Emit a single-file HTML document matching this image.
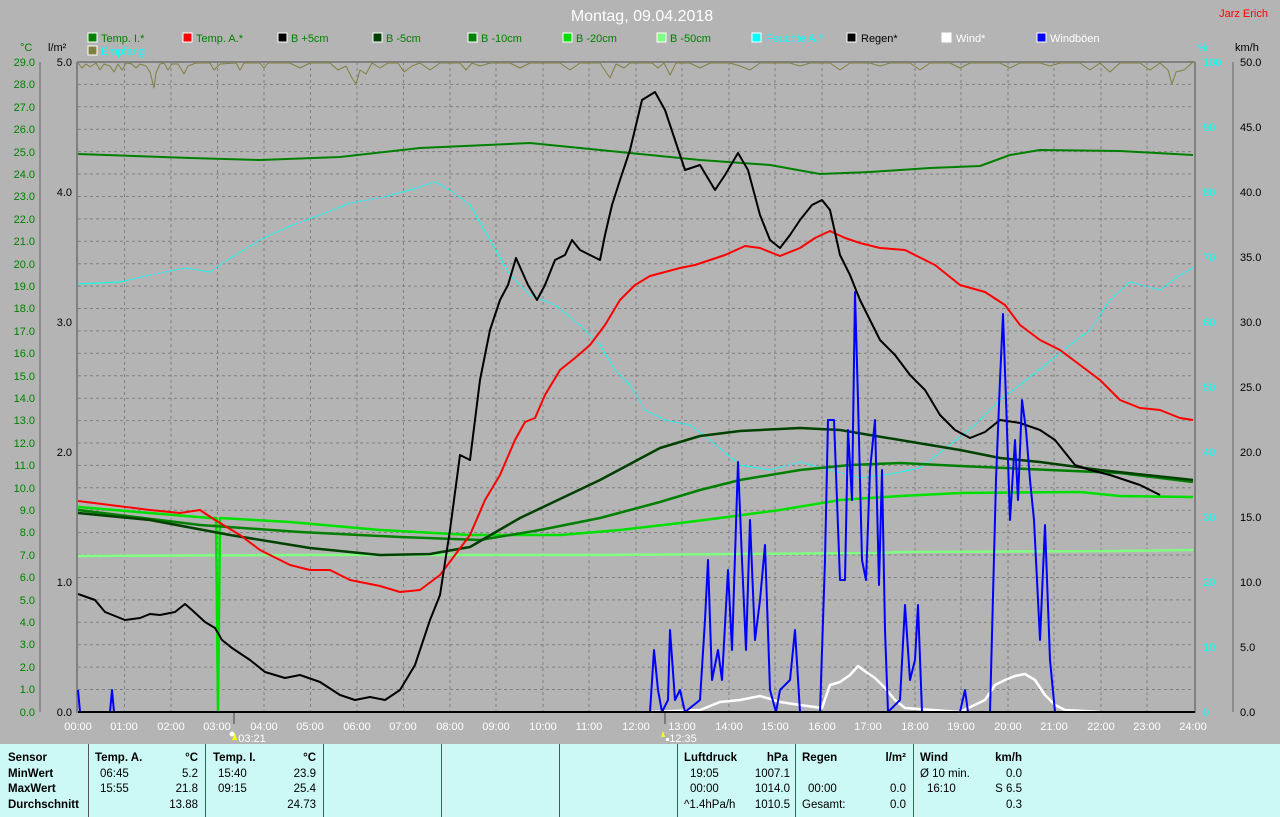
<!DOCTYPE html>
<html><head><meta charset="utf-8"><style>
body{margin:0;width:1280px;height:817px;background:#b4b4b4;overflow:hidden;font-family:"Liberation Sans",sans-serif}
svg{position:absolute;left:0;top:0}
.tbl{position:absolute;left:0;top:744px;width:1280px;height:73px;background:#ccf8f5}
.sep{position:absolute;top:0;height:73px;width:1px;background:#555}
.t{position:absolute;font-size:11.5px;color:#000;white-space:nowrap}
.b{font-weight:bold}
.r{text-align:right}
</style></head><body>
<svg width="1280" height="744" font-family="Liberation Sans, sans-serif">
<text x="642" y="21" fill="#fff" font-size="16" text-anchor="middle">Montag, 09.04.2018</text>
<text x="1268" y="17" fill="#f00" font-size="11" text-anchor="end">Jarz Erich</text>
<g font-size="11">
<rect x="88" y="33" width="9" height="9" fill="#008000" stroke="#fff"/><text x="101" y="42" fill="#008000">Temp. I.*</text>
<rect x="183" y="33" width="9" height="9" fill="#f00" stroke="#fff"/><text x="196" y="42" fill="#008000">Temp. A.*</text>
<rect x="278" y="33" width="9" height="9" fill="#000" stroke="#fff"/><text x="291" y="42" fill="#008000">B +5cm</text>
<rect x="373" y="33" width="9" height="9" fill="#004000" stroke="#fff"/><text x="386" y="42" fill="#008000">B -5cm</text>
<rect x="468" y="33" width="9" height="9" fill="#008000" stroke="#fff"/><text x="481" y="42" fill="#008000">B -10cm</text>
<rect x="563" y="33" width="9" height="9" fill="#00e000" stroke="#fff"/><text x="576" y="42" fill="#008000">B -20cm</text>
<rect x="657" y="33" width="9" height="9" fill="#80ff80" stroke="#fff"/><text x="670" y="42" fill="#008000">B -50cm</text>
<rect x="752" y="33" width="9" height="9" fill="#0ff" stroke="#fff"/><text x="766" y="42" fill="#0ff">Feuchte A.*</text>
<rect x="847" y="33" width="9" height="9" fill="#000" stroke="#fff"/><text x="861" y="42" fill="#000">Regen*</text>
<rect x="942" y="33" width="9" height="9" fill="#fff" stroke="#fff"/><text x="956" y="42" fill="#fff">Wind*</text>
<rect x="1037" y="33" width="9" height="9" fill="#00f" stroke="#fff"/><text x="1050" y="42" fill="#fff">Windböen</text>
<rect x="88" y="46" width="9" height="9" fill="#808040" stroke="#fff"/><text x="101" y="55" fill="#0ff">Empfang</text>
<text x="20" y="51" fill="#008000">°C</text><text x="48" y="51" fill="#000">l/m²</text>
<text x="1198" y="51" fill="#0ff">%</text><text x="1235" y="51" fill="#000">km/h</text>
</g>
<!-- grid -->
<g stroke="#808080" stroke-dasharray="3,3" stroke-width="1">
<path d="M124.5 62V712M171 62V712M217.5 62V712M264 62V712M310.5 62V712M357 62V712M403.5 62V712M450 62V712M496 62V712M543 62V712M589 62V712M636 62V712M682 62V712M729 62V712M775 62V712M822 62V712M868 62V712M915 62V712M961 62V712M1008 62V712M1054 62V712M1101 62V712M1147 62V712"/>
<path id="hg" d="M78 84.4H1193M78 106.8H1193M78 129.2H1193M78 151.6H1193M78 174H1193M78 196.5H1193M78 218.9H1193M78 241.3H1193M78 263.7H1193M78 286.1H1193M78 308.5H1193M78 330.9H1193M78 353.3H1193M78 375.8H1193M78 398.2H1193M78 420.6H1193M78 443H1193M78 465.4H1193M78 487.8H1193M78 510.2H1193M78 532.6H1193M78 555H1193M78 577.5H1193M78 599.9H1193M78 622.3H1193M78 644.7H1193M78 667.1H1193M78 689.5H1193"/>
</g>
<g stroke="#808080" stroke-width="2" fill="none">
<path d="M77 62V713M1195 62V713M77 62H1195"/>
</g>
<path d="M40 62V712M1233 62V712" stroke="#808080" stroke-width="1.5"/>
<g font-size="11" fill="#008000" text-anchor="end">
<text x="35" y="66">29.0</text><text x="35" y="88">28.0</text><text x="35" y="111">27.0</text><text x="35" y="133">26.0</text><text x="35" y="156">25.0</text><text x="35" y="178">24.0</text><text x="35" y="200">23.0</text><text x="35" y="223">22.0</text><text x="35" y="245">21.0</text><text x="35" y="268">20.0</text><text x="35" y="290">19.0</text><text x="35" y="312">18.0</text><text x="35" y="335">17.0</text><text x="35" y="357">16.0</text><text x="35" y="380">15.0</text><text x="35" y="402">14.0</text><text x="35" y="424">13.0</text><text x="35" y="447">12.0</text><text x="35" y="469">11.0</text><text x="35" y="492">10.0</text><text x="35" y="514">9.0</text><text x="35" y="536">8.0</text><text x="35" y="559">7.0</text><text x="35" y="581">6.0</text><text x="35" y="604">5.0</text><text x="35" y="626">4.0</text><text x="35" y="648">3.0</text><text x="35" y="671">2.0</text><text x="35" y="693">1.0</text><text x="35" y="716">0.0</text>
</g>
<g font-size="11" fill="#000" text-anchor="end">
<text x="72" y="66">5.0</text><text x="72" y="196">4.0</text><text x="72" y="326">3.0</text><text x="72" y="456">2.0</text><text x="72" y="586">1.0</text><text x="72" y="716">0.0</text>
</g>
<g font-size="11" fill="#0ff">
<text x="1203" y="66">100</text><text x="1203" y="131">90</text><text x="1203" y="196">80</text><text x="1203" y="261">70</text><text x="1203" y="326">60</text><text x="1203" y="391">50</text><text x="1203" y="456">40</text><text x="1203" y="521">30</text><text x="1203" y="586">20</text><text x="1203" y="651">10</text><text x="1203" y="716">0</text>
</g>
<g font-size="11" fill="#000">
<text x="1240" y="66">50.0</text><text x="1240" y="131">45.0</text><text x="1240" y="196">40.0</text><text x="1240" y="261">35.0</text><text x="1240" y="326">30.0</text><text x="1240" y="391">25.0</text><text x="1240" y="456">20.0</text><text x="1240" y="521">15.0</text><text x="1240" y="586">10.0</text><text x="1240" y="651">5.0</text><text x="1240" y="716">0.0</text>
</g>
<g font-size="11" fill="#fff" text-anchor="middle">
<text x="78" y="730">00:00</text><text x="124" y="730">01:00</text><text x="171" y="730">02:00</text><text x="217" y="730">03:00</text><text x="264" y="730">04:00</text><text x="310" y="730">05:00</text><text x="357" y="730">06:00</text><text x="403" y="730">07:00</text><text x="450" y="730">08:00</text><text x="496" y="730">09:00</text><text x="543" y="730">10:00</text><text x="589" y="730">11:00</text><text x="636" y="730">12:00</text><text x="682" y="730">13:00</text><text x="729" y="730">14:00</text><text x="775" y="730">15:00</text><text x="822" y="730">16:00</text><text x="868" y="730">17:00</text><text x="915" y="730">18:00</text><text x="961" y="730">19:00</text><text x="1008" y="730">20:00</text><text x="1054" y="730">21:00</text><text x="1101" y="730">22:00</text><text x="1147" y="730">23:00</text><text x="1193" y="730">24:00</text>
<text x="252" y="742">03:21</text><text x="683" y="742">12:35</text>
</g>
<path d="M234 712V724M665 712V724" stroke="#666" stroke-width="1.5"/>
<circle cx="232" cy="734" r="2.5" fill="#fff"/><path d="M235 733l-3 7h5z" fill="#ff0"/>
<path d="M663 731l-2 6h4z" fill="#ff0"/><rect x="666" y="738" width="3" height="3" fill="#fff"/>
<g fill="none" stroke-linejoin="round">
<polyline stroke="#808040" stroke-width="1" points="78,63 82,68 86,64 90,67 96,63 100,70 104,64 110,66 114,72 118,64 122,70 126,63 132,64 136,68 140,64 146,66 150,72 154,88 156,73 160,64 164,63 168,70 172,64 178,64 184,74 188,66 196,63 210,63 214,70 220,64 236,63 240,70 244,63 260,63 264,68 268,63 290,63 300,68 310,63 330,63 338,70 346,66 352,78 356,84 360,70 366,74 372,63 380,68 388,63 398,63 404,72 412,66 420,63 430,70 440,63 460,63 466,70 472,63 480,66 490,63 510,63 520,68 530,63 560,63 570,70 580,63 600,63 610,78 616,64 624,68 630,63 652,63 658,68 664,63 670,75 676,63 690,63 700,68 710,63 730,63 740,66 750,70 760,63 790,63 800,66 810,63 830,63 840,70 850,63 870,63 880,66 890,63 910,63 920,70 930,63 950,63 960,68 970,63 1000,63 1010,68 1020,63 1040,63 1050,66 1060,63 1080,63 1090,70 1100,63 1110,72 1120,63 1140,63 1150,70 1160,63 1168,70 1172,84 1176,72 1184,70 1193,62"/>
<polyline stroke="#0ff" stroke-width="1" stroke-dasharray="3,1" points="78,284 120,282 150,275 185,268 210,272 235,255 260,240 290,226 320,215 350,203 380,198 410,190 435,182 450,190 470,205 490,240 510,275 530,295 555,305 580,325 600,345 615,370 630,385 645,410 665,420 690,425 710,440 740,465 770,470 800,462 830,470 860,478 890,474 920,468 950,445 975,425 1000,400 1020,385 1045,365 1070,345 1090,330 1110,300 1130,282 1160,290 1180,275 1193,268"/>
<polyline stroke="#008000" stroke-width="2" points="78,154 190,158 260,160 340,157 420,148 530,143 620,152 700,160 770,165 820,174 870,172 930,168 980,166 1010,155 1040,150 1120,151 1193,155"/>
<polyline stroke="#80ff80" stroke-width="2.5" points="78,556 300,555 600,555 880,553 900,552 1120,551 1193,550"/>
<polyline stroke="#00e000" stroke-width="2.5" points="78,507 210,518 216,518 218,712 220,518 290,522 380,530 470,535 560,535 620,530 680,523 720,518 780,510 840,500 900,496 960,493 1080,492 1120,496 1193,497"/>
<polyline stroke="#008000" stroke-width="2.5" points="78,510 200,525 300,532 400,537 480,540 540,530 600,518 660,502 700,490 740,480 800,470 850,465 900,463 960,466 1050,470 1120,473 1193,482"/>
<polyline stroke="#004000" stroke-width="2.5" points="78,513 150,520 230,535 310,548 380,555 430,554 470,547 520,518 600,480 660,448 700,436 740,431 800,428 840,430 900,440 960,450 1000,458 1040,462 1100,470 1193,480"/>
<polyline stroke="#f00" stroke-width="2" points="78,501 110,505 150,510 180,513 200,510 215,520 240,535 260,550 290,565 310,570 330,570 350,580 380,586 400,592 420,590 440,575 455,555 470,535 485,500 500,475 515,440 525,422 535,418 545,395 560,370 575,358 590,345 605,325 620,300 635,285 650,276 665,272 680,268 695,265 710,260 725,255 745,246 760,248 780,256 800,248 815,238 830,231 845,238 860,243 880,248 905,250 935,265 960,285 985,292 1005,305 1020,325 1040,340 1060,350 1080,365 1100,380 1120,400 1140,408 1160,410 1180,418 1193,420"/>
<polyline stroke="#000" stroke-width="2" points="78,594 95,600 105,612 125,620 140,618 150,614 160,615 175,612 185,604 192,610 205,622 215,628 222,640 232,648 250,660 265,672 285,678 300,675 320,682 340,695 355,700 370,697 385,700 400,690 415,665 430,620 440,595 450,530 460,455 470,460 480,380 490,330 500,300 508,285 516,258 528,285 537,300 545,285 555,260 565,255 572,240 580,250 590,255 600,260 605,235 612,205 620,180 630,150 642,100 655,92 665,110 675,140 685,170 700,165 715,190 725,175 738,153 748,170 760,215 770,240 780,248 790,235 800,220 812,205 822,200 830,210 840,255 850,275 860,300 870,320 880,340 895,355 910,375 925,390 940,415 955,430 970,438 985,432 1000,420 1020,423 1040,430 1055,440 1075,465 1090,470 1110,475 1125,480 1140,485 1160,495"/>
<polyline stroke="#fff" stroke-width="2.5" points="650,712 700,710 720,702 740,700 760,696 780,702 800,705 822,708 830,685 840,682 850,675 858,666 866,672 875,678 885,688 895,700 905,708 960,712 985,700 995,685 1005,680 1015,676 1025,674 1035,680 1045,695 1055,705 1065,710 1100,712"/>
<polyline stroke="#00f" stroke-width="2" points="78,690 80,712 110,712 112,690 114,712 650,712 654,650 658,690 662,712 668,700 670,630 675,700 680,690 685,712 700,700 705,620 708,560 712,680 718,650 722,680 728,570 732,650 738,462 742,560 746,650 750,520 755,640 760,600 765,545 770,690 776,712 780,690 790,680 795,630 800,712 820,712 825,560 828,420 834,420 840,580 845,580 848,430 852,500 855,292 858,400 862,560 866,580 870,470 875,420 879,585 882,470 885,630 888,712 900,700 905,605 910,680 915,660 918,605 922,712 960,712 965,690 968,712 990,712 996,480 1000,380 1003,314 1006,400 1010,520 1015,440 1018,500 1022,400 1026,430 1030,480 1034,520 1040,640 1045,525 1050,660 1055,712"/>
</g>
<path d="M78 712H1195" stroke="#000" stroke-width="2"/>
</svg>
<div class="tbl">
<div class="sep" style="left:88px"></div><div class="sep" style="left:205px"></div><div class="sep" style="left:323px"></div><div class="sep" style="left:441px"></div><div class="sep" style="left:559px"></div><div class="sep" style="left:677px"></div><div class="sep" style="left:795px"></div><div class="sep" style="left:913px"></div>
<div class="t b" style="left:8px;top:8px">Sensor</div><div class="t b" style="left:8px;top:24px">MinWert</div><div class="t b" style="left:8px;top:39px">MaxWert</div><div class="t b" style="left:8px;top:55px">Durchschnitt</div>
<div class="t b" style="left:95px;top:8px">Temp. A.</div><div class="t b r" style="left:160px;width:38px;top:8px">°C</div>
<div class="t" style="left:100px;top:24px">06:45</div><div class="t r" style="left:160px;width:38px;top:24px">5.2</div>
<div class="t" style="left:100px;top:39px">15:55</div><div class="t r" style="left:160px;width:38px;top:39px">21.8</div>
<div class="t r" style="left:160px;width:38px;top:55px">13.88</div>
<div class="t b" style="left:213px;top:8px">Temp. I.</div><div class="t b r" style="left:278px;width:38px;top:8px">°C</div>
<div class="t" style="left:218px;top:24px">15:40</div><div class="t r" style="left:278px;width:38px;top:24px">23.9</div>
<div class="t" style="left:218px;top:39px">09:15</div><div class="t r" style="left:278px;width:38px;top:39px">25.4</div>
<div class="t r" style="left:278px;width:38px;top:55px">24.73</div>
<div class="t b" style="left:684px;top:8px">Luftdruck</div><div class="t b r" style="left:748px;width:40px;top:8px">hPa</div>
<div class="t" style="left:690px;top:24px">19:05</div><div class="t r" style="left:738px;width:52px;top:24px">1007.1</div>
<div class="t" style="left:690px;top:39px">00:00</div><div class="t r" style="left:738px;width:52px;top:39px">1014.0</div>
<div class="t" style="left:684px;top:55px">^1.4hPa/h</div><div class="t r" style="left:738px;width:52px;top:55px">1010.5</div>
<div class="t b" style="left:802px;top:8px">Regen</div><div class="t b r" style="left:866px;width:40px;top:8px">l/m²</div>
<div class="t" style="left:808px;top:39px">00:00</div><div class="t r" style="left:866px;width:40px;top:39px">0.0</div>
<div class="t" style="left:802px;top:55px">Gesamt:</div><div class="t r" style="left:866px;width:40px;top:55px">0.0</div>
<div class="t b" style="left:920px;top:8px">Wind</div><div class="t b r" style="left:980px;width:42px;top:8px">km/h</div>
<div class="t" style="left:920px;top:24px">Ø 10 min.</div><div class="t r" style="left:980px;width:42px;top:24px">0.0</div>
<div class="t" style="left:927px;top:39px">16:10</div><div class="t r" style="left:980px;width:42px;top:39px">S 6.5</div>
<div class="t r" style="left:980px;width:42px;top:55px">0.3</div>
</div>
</body></html>
